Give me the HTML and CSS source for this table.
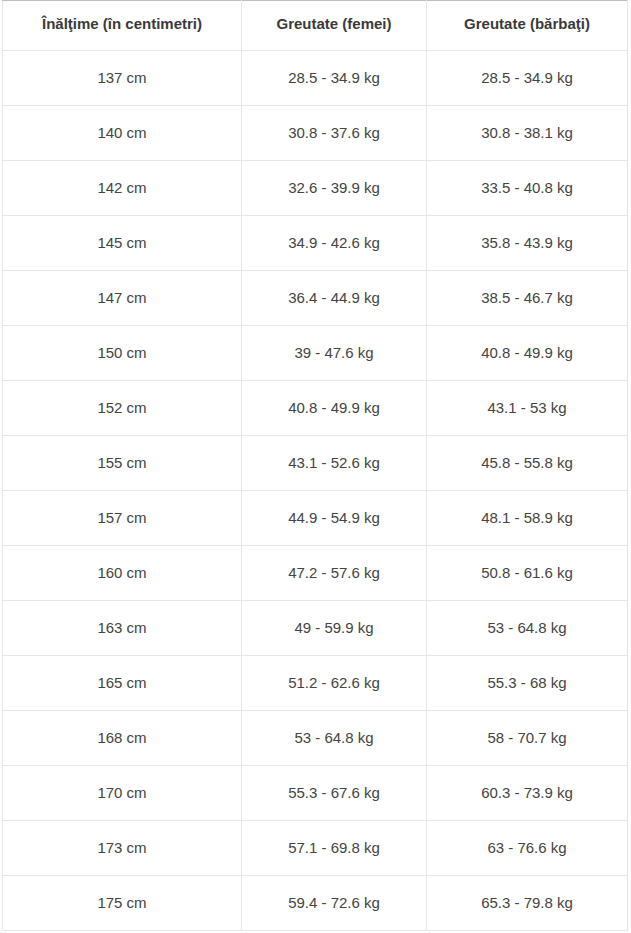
FILE: index.html
```html
<!DOCTYPE html>
<html lang="ro">
<head>
<meta charset="utf-8">
<link rel="stylesheet" href="styles.css">
</head>
<body>
<table class="weights">
<colgroup><col class="c1"><col class="c2"><col class="c3"></colgroup>
<thead>
<tr><th>Înălţime (în centimetri)</th><th>Greutate (femei)</th><th>Greutate (bărbaţi)</th></tr>
</thead>
<tbody>
<tr><td>137 cm</td><td>28.5 - 34.9 kg</td><td>28.5 - 34.9 kg</td></tr>
<tr><td>140 cm</td><td>30.8 - 37.6 kg</td><td>30.8 - 38.1 kg</td></tr>
<tr><td>142 cm</td><td>32.6 - 39.9 kg</td><td>33.5 - 40.8 kg</td></tr>
<tr><td>145 cm</td><td>34.9 - 42.6 kg</td><td>35.8 - 43.9 kg</td></tr>
<tr><td>147 cm</td><td>36.4 - 44.9 kg</td><td>38.5 - 46.7 kg</td></tr>
<tr><td>150 cm</td><td>39 - 47.6 kg</td><td>40.8 - 49.9 kg</td></tr>
<tr><td>152 cm</td><td>40.8 - 49.9 kg</td><td>43.1 - 53 kg</td></tr>
<tr><td>155 cm</td><td>43.1 - 52.6 kg</td><td>45.8 - 55.8 kg</td></tr>
<tr><td>157 cm</td><td>44.9 - 54.9 kg</td><td>48.1 - 58.9 kg</td></tr>
<tr><td>160 cm</td><td>47.2 - 57.6 kg</td><td>50.8 - 61.6 kg</td></tr>
<tr><td>163 cm</td><td>49 - 59.9 kg</td><td>53 - 64.8 kg</td></tr>
<tr><td>165 cm</td><td>51.2 - 62.6 kg</td><td>55.3 - 68 kg</td></tr>
<tr><td>168 cm</td><td>53 - 64.8 kg</td><td>58 - 70.7 kg</td></tr>
<tr><td>170 cm</td><td>55.3 - 67.6 kg</td><td>60.3 - 73.9 kg</td></tr>
<tr><td>173 cm</td><td>57.1 - 69.8 kg</td><td>63 - 76.6 kg</td></tr>
<tr><td>175 cm</td><td>59.4 - 72.6 kg</td><td>65.3 - 79.8 kg</td></tr>
</tbody>
</table>
</body>
</html>
```

FILE: styles.css
```css
html, body {
  margin: 0;
  padding: 0;
  background: #fff;
}
body {
  padding-left: 2px;
  font-family: "Liberation Sans", Arial, sans-serif;
  color: #444;
}
.weights {
  border-collapse: collapse;
  table-layout: fixed;
  width: 625px;
  border-top: 1px solid #bdbdbd;
}
.c1 { width: 239px; }
.c2 { width: 185px; }
.c3 { width: 201px; }
.weights th,
.weights td {
  border: 1px solid #e6e6e6;
  text-align: center;
  vertical-align: middle;
  padding: 0 8px;
}
.weights thead tr:first-child th {
  border-top: 1px solid #bdbdbd;
}
.weights th {
  height: 44px;
  font-size: 15px;
  font-weight: bold;
  color: #3a3a3a;
  padding-bottom: 5px;
}
.weights td {
  height: 53px;
  font-size: 15px;
  padding-bottom: 1px;
}
```
